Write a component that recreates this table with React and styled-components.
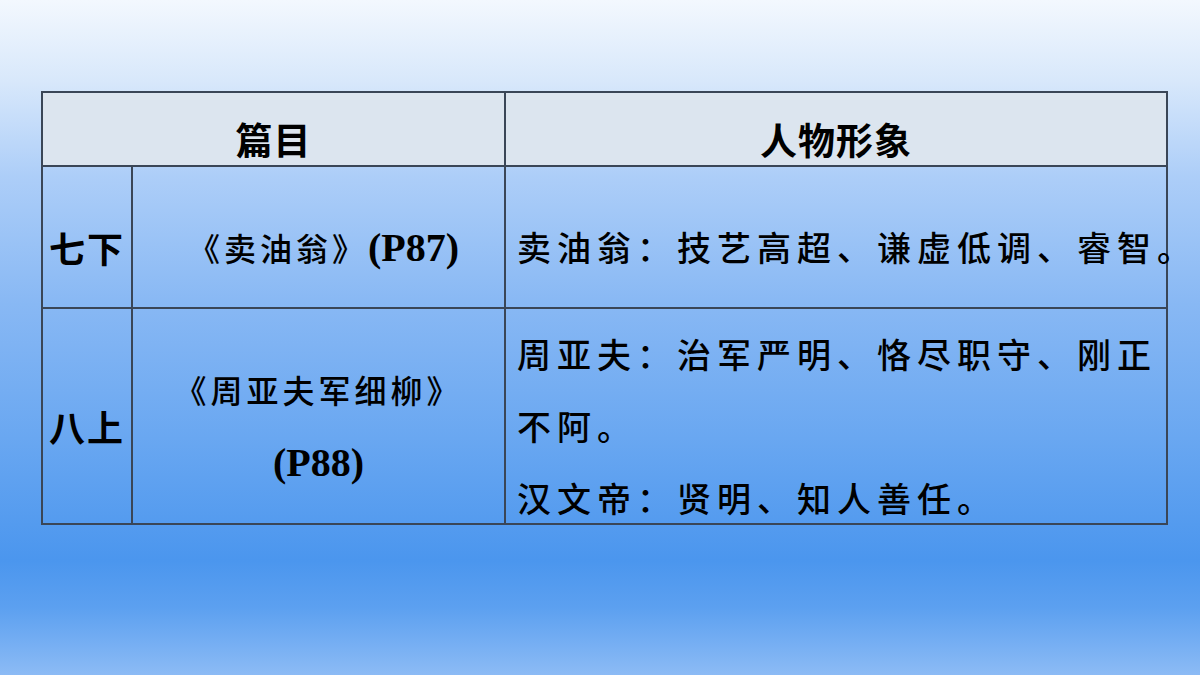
import React from 'react';
import styled, { createGlobalStyle } from 'styled-components';

const GlobalStyle = createGlobalStyle`
  html, body {
    margin: 0;
    padding: 0;
  }
  body {
    width: 1200px;
    height: 675px;
    overflow: hidden;
    background: linear-gradient(
      180deg,
      #f3f8fe 0%,
      #d8e8fb 12%,
      #adcef8 26%,
      #88b8f4 45%,
      #69a7f1 65%,
      #4b96ee 83%,
      #5ca0f0 90%,
      #8cbbf5 100%
    );
    font-family: "Noto Sans CJK SC", "Noto Sans", sans-serif;
    color: #000;
  }
`;

const Slide = styled.div`
  width: 1200px;
  height: 675px;
  padding: 91px 0 0 41px;
  box-sizing: border-box;
`;

const Table = styled.div`
  display: grid;
  grid-template-columns: 90px 373px 662px;
  grid-template-rows: 74px 142px 216px;
  width: max-content;
  border-top: 2px solid #3a4657;
  border-left: 2px solid #3a4657;
`;

const Cell = styled.div`
  box-sizing: border-box;
  display: flex;
  flex-direction: column;
  align-items: ${(p) => (p.$left ? 'flex-start' : 'center')};
  justify-content: center;
  padding: ${(p) => (p.$left ? '20px 0 0 11px' : '20px 0 0 0')};
  border-right: 2px solid #3a4657;
  border-bottom: 2px solid #3a4657;
  grid-column: ${(p) => p.$span || 'auto'};
  background: ${(p) => (p.$head ? '#dce5ef' : 'transparent')};
  white-space: nowrap;
  overflow: visible;
`;

const HeadText = styled.span`
  font-family: "Noto Sans CJK SC", sans-serif;
  font-weight: 700;
  font-size: 37px;
  line-height: 1;
  letter-spacing: 1px;
`;

const Grade = styled.span`
  font-family: "Noto Sans CJK SC", sans-serif;
  font-weight: 700;
  font-size: 36px;
  line-height: 1;
  letter-spacing: 2px;
`;

const Title = styled.div`
  font-family: "Noto Sans CJK SC", sans-serif;
  font-weight: 500;
  font-size: 32px;
  letter-spacing: 4px;
  line-height: 73px;
  text-align: center;
  padding-left: ${(p) => (p.$shift ? '10px' : '0')};
`;

const Page = styled.span`
  font-family: "Liberation Serif", serif;
  font-weight: 700;
  font-size: 40px;
  letter-spacing: 0;
`;

const Desc = styled.div`
  font-family: "Noto Sans CJK SC", sans-serif;
  font-weight: 500;
  font-size: 34px;
  letter-spacing: 6px;
  line-height: 72px;
`;

export default function App() {
  return (
    <>
      <GlobalStyle />
      <Slide>
        <Table>
          <Cell $head $span="1 / span 2">
            <HeadText>篇目</HeadText>
          </Cell>
          <Cell $head>
            <HeadText>人物形象</HeadText>
          </Cell>

          <Cell>
            <Grade>七下</Grade>
          </Cell>
          <Cell>
            <Title $shift>
              《卖油翁》<Page>(P87)</Page>
            </Title>
          </Cell>
          <Cell $left>
            <Desc>卖油翁：技艺高超、谦虚低调、睿智。</Desc>
          </Cell>

          <Cell>
            <Grade>八上</Grade>
          </Cell>
          <Cell>
            <Title>《周亚夫军细柳》</Title>
            <Title>
              <Page>(P88)</Page>
            </Title>
          </Cell>
          <Cell $left>
            <Desc>周亚夫：治军严明、恪尽职守、刚正</Desc>
            <Desc>不阿。</Desc>
            <Desc>汉文帝：贤明、知人善任。</Desc>
          </Cell>
        </Table>
      </Slide>
    </>
  );
}
